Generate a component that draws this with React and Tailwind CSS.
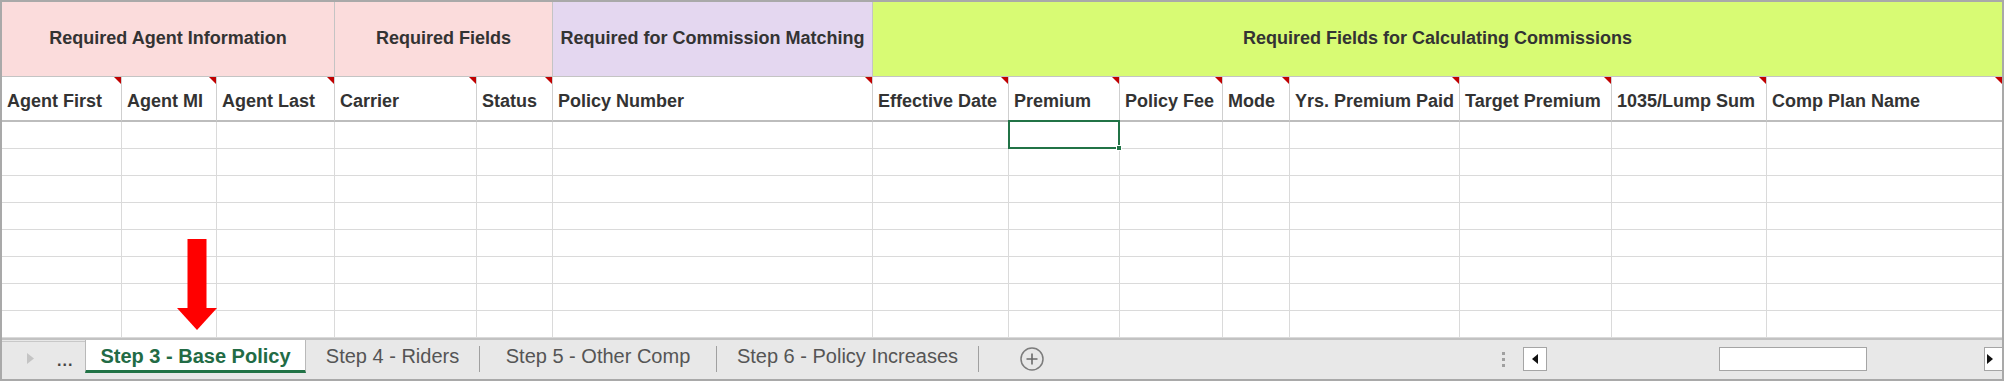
import React from "react";

const groups = [
  { label: "Required Agent Information", w: "w-[333px]", bg: "bg-[#fbdcdc]" },
  { label: "Required Fields", w: "w-[218px]", bg: "bg-[#fbdcdc]" },
  { label: "Required for Commission Matching", w: "w-[320px]", bg: "bg-[#e4d7f0]" },
  { label: "Required Fields for Calculating Commissions", w: "w-[1129px]", bg: "bg-[#d8fb74]", last: true },
];

const cols = [
  { label: "Agent First", w: "w-[120px]" },
  { label: "Agent MI", w: "w-[95px]" },
  { label: "Agent Last", w: "w-[118px]" },
  { label: "Carrier", w: "w-[142px]" },
  { label: "Status", w: "w-[76px]" },
  { label: "Policy Number", w: "w-[320px]" },
  { label: "Effective Date", w: "w-[136px]" },
  { label: "Premium", w: "w-[111px]" },
  { label: "Policy Fee", w: "w-[103px]" },
  { label: "Mode", w: "w-[67px]" },
  { label: "Yrs. Premium Paid", w: "w-[170px]" },
  { label: "Target Premium", w: "w-[152px]" },
  { label: "1035/Lump Sum", w: "w-[155px]" },
  { label: "Comp Plan Name", w: "w-[235px]", last: true },
];

function Corner() {
  return (
    <svg className="absolute top-0 right-0" width="7" height="7" viewBox="0 0 7 7">
      <polygon points="0,0 7,0 7,7" fill="#c00000" />
    </svg>
  );
}

export default function App() {
  const rows = Array.from({ length: 8 });
  return (
    <div className="relative w-[2004px] h-[381px] overflow-hidden border-2 border-[#a9a9a9] bg-white flex flex-col font-['Liberation_Sans',Arial,sans-serif] text-[#333333]">
      {/* group header row */}
      <div className="flex h-[75px] shrink-0">
        {groups.map((g, i) => (
          <div
            key={i}
            className={`${g.w} ${g.bg} shrink-0 h-full flex items-center justify-center pb-[3px] border-b border-[#c4c4c4] ${g.last ? "" : "border-r"} font-bold text-[18px] leading-none`}
          >
            {g.label}
          </div>
        ))}
      </div>

      {/* column header row */}
      <div className="flex h-[45px] shrink-0">
        {cols.map((c, i) => (
          <div
            key={i}
            className={`relative ${c.w} shrink-0 h-full flex items-center pl-[5px] pt-[4px] border-b-2 border-b-[#bdbdbd] ${c.last ? "" : "border-r border-r-[#cfcfcf]"} font-bold text-[18px] leading-none whitespace-nowrap`}
          >
            {c.label}
            <Corner />
          </div>
        ))}
      </div>

      {/* data rows */}
      {rows.map((_, r) => (
        <div key={r} className="flex h-[27px] shrink-0">
          {cols.map((c, i) => (
            <div
              key={i}
              className={`relative ${c.w} shrink-0 h-full border-b border-b-[#dadada] ${c.last ? "" : "border-r border-r-[#dadada]"}`}
            >
              {r === 0 && i === 7 && (
                <div className="absolute -top-[2px] -left-px -right-px -bottom-px border-2 border-[#217346] z-10">
                  <div className="absolute -right-[4px] -bottom-[4px] w-[6px] h-[6px] bg-[#217346] border border-white"></div>
                </div>
              )}
            </div>
          ))}
        </div>
      ))}

      {/* sheet tab bar */}
      <div className="flex items-start h-[41px] shrink-0 bg-[#e8e8e8] border-t-2 border-[#c2c2c2] text-[20px] leading-none">
        <div className="w-[83px] shrink-0 h-[34px] flex items-center border-t border-[#c8c8c8] mt-[1px]">
          <svg className="ml-[25px]" width="7" height="11" viewBox="0 0 7 11">
            <polygon points="0,0 7,5.5 0,11" fill="#c4c4c4" />
          </svg>
          <span className="ml-[23px] text-[#444] text-[16px] font-bold tracking-[1px] pt-[4px]">...</span>
        </div>
        <div className="w-[221px] shrink-0 h-[33px] bg-white border-x border-[#b9b9b9] border-b-[3px] border-b-[#217346] flex items-center justify-center font-bold text-[#226b45] pt-[1px]">
          Step 3 - Base Policy
        </div>
        <div className="w-[173px] shrink-0 h-[32px] flex items-center justify-center text-[#555]">Step 4 - Riders</div>
        <div className="w-px h-[26px] mt-[6px] bg-[#a0a0a0] shrink-0"></div>
        <div className="w-[236px] shrink-0 h-[32px] flex items-center justify-center text-[#555]">Step 5 - Other Comp</div>
        <div className="w-px h-[26px] mt-[6px] bg-[#a0a0a0] shrink-0"></div>
        <div className="w-[261px] shrink-0 h-[32px] flex items-center justify-center text-[#555]">Step 6 - Policy Increases</div>
        <div className="w-px h-[26px] mt-[6px] bg-[#a0a0a0] shrink-0"></div>
        <svg className="ml-[41px] mt-[7px] shrink-0" width="24" height="24" viewBox="0 0 24 24">
          <circle cx="12" cy="12" r="11" fill="none" stroke="#7c7c7c" strokeWidth="1.5" />
          <path d="M12 6.5v11M6.5 12h11" stroke="#6a6a6a" strokeWidth="1.6" />
        </svg>
        <div className="flex-1"></div>
        <div className="w-[507px] shrink-0 flex items-start">
          <div className="ml-[7px] mt-[12px] flex flex-col gap-[3px]">
            <div className="w-[3px] h-[3px] bg-[#a0a0a0]"></div>
            <div className="w-[3px] h-[3px] bg-[#a0a0a0]"></div>
            <div className="w-[3px] h-[3px] bg-[#a0a0a0]"></div>
          </div>
          <div className="ml-[18px] mt-[7px] w-[24px] h-[24px] bg-white border border-[#a5a5a5] flex items-center justify-center shrink-0">
            <svg width="6" height="10" viewBox="0 0 6 10">
              <polygon points="6,0 0,5 6,10" fill="#111" />
            </svg>
          </div>
          <div className="ml-[172px] mt-[7px] w-[148px] h-[24px] bg-white border border-[#a5a5a5] shrink-0"></div>
          <div className="ml-[117px] mt-[7px] w-[24px] h-[24px] bg-white border border-[#a5a5a5] flex items-center justify-start pl-[2px] shrink-0">
            <svg width="6" height="10" viewBox="0 0 6 10">
              <polygon points="0,0 6,5 0,10" fill="#111" />
            </svg>
          </div>
        </div>
      </div>

      {/* red arrow annotation */}
      <svg className="absolute left-[175px] top-[237px] z-20" width="40" height="91" viewBox="0 0 40 91">
        <rect x="10.5" y="0" width="19" height="70" fill="#ff0000" />
        <polygon points="0,69 40,69 20,91" fill="#ff0000" />
      </svg>
    </div>
  );
}
